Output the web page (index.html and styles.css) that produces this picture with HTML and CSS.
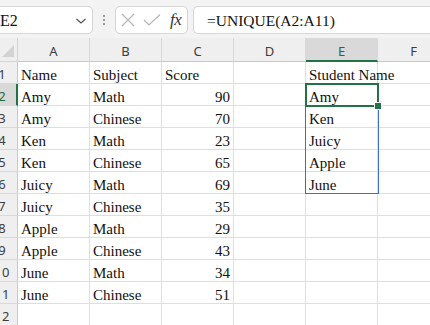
FILE: index.html
```html
<!DOCTYPE html>
<html>
<head>
<meta charset="utf-8">
<link rel="stylesheet" href="styles.css">
</head>
<body>
<div class="app">
  <div class="toolbar">
    <div class="namebox">
      <span class="nb-text">E2</span>
      <svg class="chev" width="12" height="8" viewBox="0 0 12 8"><path d="M1.5 2 L6 6 L10.5 2" fill="none" stroke="#555" stroke-width="1.3"/></svg>
    </div>
    <div class="dots"><i></i><i></i><i></i></div>
    <div class="fxbox">
      <svg class="ico" width="14" height="14" viewBox="0 0 14 14"><path d="M1 1 L13 13 M13 1 L1 13" stroke="#b8b8b8" stroke-width="1.2" fill="none"/></svg>
      <svg class="ico" width="18" height="14" viewBox="0 0 18 14"><path d="M1 7 L6 12 L17 1.5" stroke="#b8b8b8" stroke-width="1.2" fill="none"/></svg>
      <span class="fx">fx</span>
    </div>
    <div class="formula">=UNIQUE(A2:A11)</div>
  </div>
  <div class="sheet">
    <div class="grid">
      <div class="corner"><span class="tri"></span></div>
      <div class="ch">A</div><div class="ch">B</div><div class="ch">C</div><div class="ch">D</div><div class="ch sel">E</div><div class="ch">F</div>

      <div class="rh"><span>1</span></div><div class="c">Name</div><div class="c">Subject</div><div class="c">Score</div><div class="c"></div><div class="c">Student Name</div><div class="c"></div>
      <div class="rh sel"><span>2</span></div><div class="c">Amy</div><div class="c">Math</div><div class="c n">90</div><div class="c"></div><div class="c">Amy</div><div class="c"></div>
      <div class="rh"><span>3</span></div><div class="c">Amy</div><div class="c">Chinese</div><div class="c n">70</div><div class="c"></div><div class="c">Ken</div><div class="c"></div>
      <div class="rh"><span>4</span></div><div class="c">Ken</div><div class="c">Math</div><div class="c n">23</div><div class="c"></div><div class="c">Juicy</div><div class="c"></div>
      <div class="rh"><span>5</span></div><div class="c">Ken</div><div class="c">Chinese</div><div class="c n">65</div><div class="c"></div><div class="c">Apple</div><div class="c"></div>
      <div class="rh"><span>6</span></div><div class="c">Juicy</div><div class="c">Math</div><div class="c n">69</div><div class="c"></div><div class="c">June</div><div class="c"></div>
      <div class="rh"><span>7</span></div><div class="c">Juicy</div><div class="c">Chinese</div><div class="c n">35</div><div class="c"></div><div class="c"></div><div class="c"></div>
      <div class="rh"><span>8</span></div><div class="c">Apple</div><div class="c">Math</div><div class="c n">29</div><div class="c"></div><div class="c"></div><div class="c"></div>
      <div class="rh"><span>9</span></div><div class="c">Apple</div><div class="c">Chinese</div><div class="c n">43</div><div class="c"></div><div class="c"></div><div class="c"></div>
      <div class="rh"><span>10</span></div><div class="c">June</div><div class="c">Math</div><div class="c n">34</div><div class="c"></div><div class="c"></div><div class="c"></div>
      <div class="rh"><span>11</span></div><div class="c">June</div><div class="c">Chinese</div><div class="c n">51</div><div class="c"></div><div class="c"></div><div class="c"></div>
      <div class="rh"><span>12</span></div><div class="c"></div><div class="c"></div><div class="c"></div><div class="c"></div><div class="c"></div><div class="c"></div>
    </div>
    <div class="range"></div>
    <div class="active"><span class="handle"></span></div>
  </div>
</div>
</body>
</html>
```
FILE: styles.css
```css
html, body {
  margin: 0;
  padding: 0;
  background: #ffffff;
}
.app {
  width: 430px;
  height: 325px;
  overflow: hidden;
  position: relative;
}
.toolbar {
  height: 38px;
  background: #f3f3f3;
  display: flex;
  align-items: center;
  box-sizing: border-box;
  padding-top: 2px;
}
.namebox {
  margin-left: -6px;
  width: 99px;
  height: 28px;
  box-sizing: border-box;
  background: #fff;
  border: 1px solid #d6d6d6;
  border-radius: 5px;
  display: flex;
  align-items: center;
  justify-content: space-between;
  padding: 0 5px 0 5px;
}
.nb-text {
  font-family: "Liberation Serif", serif;
  font-size: 16px;
  color: #111;
  margin-top: 1px;
}
.chev { margin-top: 1px; }
.dots {
  width: 22px;
  display: flex;
  flex-direction: column;
  align-items: center;
  gap: 2px;
}
.dots i {
  display: block;
  width: 2px;
  height: 2px;
  background: #9a9a9a;
}
.fxbox {
  width: 73px;
  height: 28px;
  box-sizing: border-box;
  background: #fff;
  border: 1px solid #d6d6d6;
  border-radius: 5px;
  display: flex;
  align-items: center;
  padding: 0 4px 0 5px;
  gap: 8px;
}
.fx {
  font-family: "Liberation Serif", serif;
  font-style: italic;
  font-size: 17px;
  color: #333;
  margin-left: 1px;
  letter-spacing: -0.5px;
}
.formula {
  margin-left: 5px;
  flex: 1;
  height: 28px;
  box-sizing: border-box;
  background: #fff;
  border: 1px solid #d6d6d6;
  border-right: none;
  border-radius: 5px 0 0 5px;
  padding-left: 13px;
  font-family: "Liberation Serif", serif;
  font-size: 15.5px;
  line-height: 28px;
  color: #111;
  white-space: nowrap;
}
.sheet {
  position: relative;
}
.grid {
  display: grid;
  grid-template-columns: 18px repeat(6, 72px);
  grid-template-rows: 24px repeat(12, 22px);
  width: 450px;
}
.corner {
  background: #efefef;
  border-right: 1px solid #d4d4d4;
  border-bottom: 1px solid #d4d4d4;
  box-sizing: border-box;
  position: relative;
}
.tri {
  position: absolute;
  right: 3px;
  bottom: 4px;
  width: 0;
  height: 0;
  border-left: 12px solid transparent;
  border-bottom: 12px solid #d3d3d3;
}
.ch {
  background: #efefef;
  border-right: 1px solid #d8d8d8;
  border-bottom: 1px solid #c8c8c8;
  box-sizing: border-box;
  font-family: "Noto Sans", "DejaVu Sans", sans-serif;
  font-size: 13px;
  color: #3d3d3d;
  text-align: center;
  line-height: 26px;
}
.ch.sel {
  background: #d9d9d9;
  border-bottom: 2px solid #217346;
  color: #1e6b40;
}
.rh {
  background: #efefef;
  border-right: 1px solid #c8c8c8;
  border-bottom: 1px solid #d8d8d8;
  box-sizing: border-box;
  overflow: hidden;
  position: relative;
  font-family: "Noto Sans", "DejaVu Sans", sans-serif;
  font-size: 13px;
  color: #3d3d3d;
  line-height: 25px;
}
.rh span {
  position: absolute;
  left: -12px;
  width: 28px;
  text-align: center;
}
.rh.sel {
  background: #d9d9d9;
  border-right: 2px solid #217346;
  color: #1e6b40;
}
.c {
  border-right: 1px solid #dedede;
  border-bottom: 1px solid #dedede;
  box-sizing: border-box;
  font-family: "Liberation Serif", serif;
  font-size: 15px;
  color: #111;
  line-height: 26px;
  padding: 0 3px;
  white-space: nowrap;
  overflow: visible;
}
.c.n {
  text-align: right;
}
.range {
  position: absolute;
  left: 305px;
  top: 45px;
  width: 74px;
  height: 111px;
  border: 1px solid #3a6fcd;
  box-sizing: border-box;
}
.active {
  position: absolute;
  left: 305px;
  top: 45px;
  width: 74px;
  height: 24px;
  border: 2px solid #217346;
  box-sizing: border-box;
}
.handle {
  position: absolute;
  right: -5px;
  bottom: -5px;
  width: 6px;
  height: 6px;
  background: #217346;
  border: 1px solid #fff;
}
```
